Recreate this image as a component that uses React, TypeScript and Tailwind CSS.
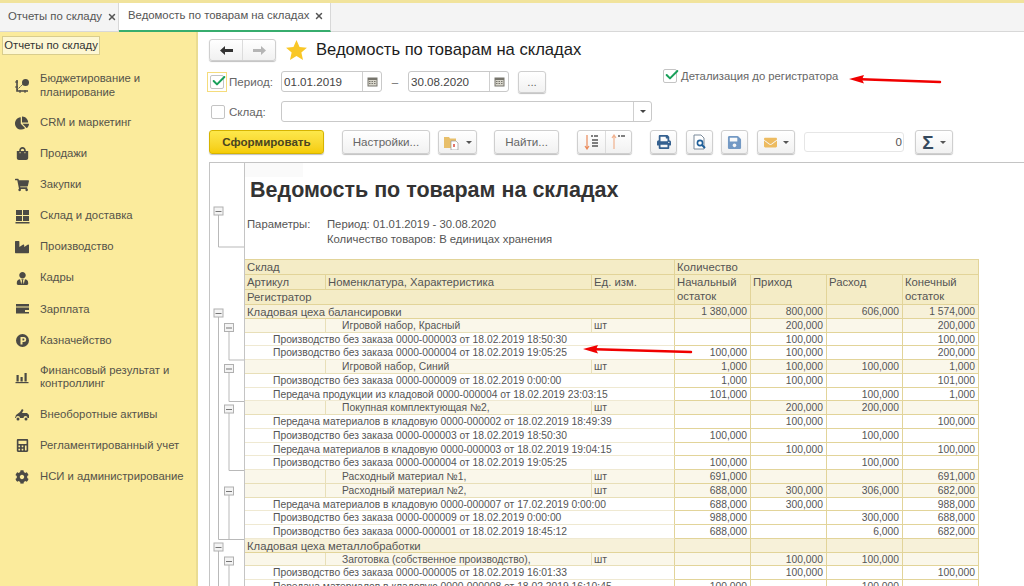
import { ReactNode } from "react";
import { FaChartPie, FaShoppingBag, FaShoppingCart, FaIndustry, FaUserTie, FaCog, FaCalculator, FaPrint, FaSave, FaEnvelope } from "react-icons/fa";
import { X, Check } from "lucide-react";

const ICON = "#4b4a45";

const BudgetIcon = () => (
  <svg width="16" height="16" viewBox="0 0 16 16" fill="none" stroke={ICON}>
    <path d="M3 2v11h11" strokeWidth="1.6" />
    <path d="M3 12l7-7" strokeWidth="1" strokeDasharray="2 1" />
    <path d="M1 4h3M1 9h3M6 15v-3M11 15v-3" strokeWidth="1" />
    <circle cx="11.5" cy="4.5" r="3.5" fill={ICON} stroke="none" />
  </svg>
);
const StockIcon = () => (
  <svg width="15" height="15" viewBox="0 0 15 15" fill={ICON}>
    <rect x="1" y="1" width="6" height="5" />
    <rect x="8" y="1" width="6" height="5" />
    <rect x="1" y="7" width="6" height="5" />
    <rect x="8" y="7" width="6" height="5" />
    <rect x="0.5" y="13" width="14" height="1.5" />
  </svg>
);
const WalletIcon = () => (
  <svg width="15" height="15" viewBox="0 0 15 15" fill={ICON}>
    <rect x="1" y="2" width="13" height="2.5" />
    <path d="M1 5.5h13v2.5h-4v2h4v1.5H1z" />
  </svg>
);
const CoinIcon = () => (
  <svg width="15" height="15" viewBox="0 0 15 15" fill={ICON}>
    <path fillRule="evenodd" d="M7.5 1a6.5 6.5 0 1 1 0 13a6.5 6.5 0 0 1 0-13zM5.5 4v7.5h2V9h1.2a2.5 2.5 0 0 0 0-5zM7.5 5.6h1a.9.9 0 0 1 0 1.8h-1z" />
  </svg>
);
const BarsIcon = () => (
  <svg width="14" height="14" viewBox="0 0 14 14" fill={ICON}>
    <rect x="1.5" y="5" width="2.2" height="6.5" />
    <rect x="5.5" y="7" width="2.2" height="4.5" />
    <rect x="9.5" y="3" width="2.2" height="8.5" />
    <rect x="0.5" y="12" width="13" height="1.2" />
  </svg>
);
const AssetsIcon = () => (
  <svg width="16" height="15" viewBox="0 0 16 15" fill={ICON}>
    <path d="M1 11l1-3 4-3 2-3 1.500 1-1.500 3h5l2 2v3h-1.500a2 2 0 0 0-4 0H6a2 2 0 0 0-4 0z" />
    <circle cx="4" cy="12" r="1.500" />
    <circle cx="12" cy="12" r="1.500" />
  </svg>
);

const menu: { label: ReactNode; icon: ReactNode; tall?: boolean }[] = [
  { label: <>Бюджетирование и<br />планирование</>, icon: <BudgetIcon />, tall: true },
  { label: "CRM и маркетинг", icon: <FaChartPie size={14} color={ICON} /> },
  { label: "Продажи", icon: <FaShoppingBag size={13} color={ICON} /> },
  { label: "Закупки", icon: <FaShoppingCart size={14} color={ICON} /> },
  { label: "Склад и доставка", icon: <StockIcon /> },
  { label: "Производство", icon: <FaIndustry size={14} color={ICON} /> },
  { label: "Кадры", icon: <FaUserTie size={13} color={ICON} /> },
  { label: "Зарплата", icon: <WalletIcon /> },
  { label: "Казначейство", icon: <CoinIcon /> },
  { label: <>Финансовый результат и<br />контроллинг</>, icon: <BarsIcon />, tall: true },
  { label: "Внеоборотные активы", icon: <AssetsIcon /> },
  { label: "Регламентированный учет", icon: <FaCalculator size={13} color={ICON} /> },
  { label: "НСИ и администрирование", icon: <FaCog size={14} color={ICON} /> },
];

const BTN = "flex items-center justify-center shrink-0 h-[24px] rounded-[3px] border border-[#cfcfcf] bg-linear-to-b from-white to-[#f1f1f1] shadow-[0_1px_1px_rgba(0,0,0,0.25)] text-[#666]";

const Caret = () => <span className="ml-[6px] w-0 h-0 border-x-[3px] border-x-transparent border-t-[3px] border-t-[#555]" />;

const Calendar = () => (
  <span className="flex items-center justify-center w-[19px] h-full border-l border-[#cfcfcf]">
    <svg width="11" height="11" viewBox="0 0 11 11" fill="#77756c">
      <path d="M0.500 1.500h10v9h-10z" />
      <path d="M1.500 4h8v5.500h-8z" fill="#d8d6cc" />
      <path d="M2 5h1.500v1H2zM4.500 5H6v1H4.500zM7 5h1.500v1H7zM2 7h1.500v1H2zM4.500 7H6v1H4.500zM7 7h1.500v1H7z" />
    </svg>
  </span>
);

const DateField = ({ value }: { value: string }) => (
  <div className="flex items-center justify-between shrink-0 w-[101px] h-[21px] rounded-[3px] border border-[#c9c9c9] bg-white pl-[2px] text-[11.6px] text-[#444]">
    {value}
    <Calendar />
  </div>
);

const CheckBox = ({ checked }: { checked?: boolean }) => (
  <span className="relative block shrink-0 w-[14px] h-[14px] rounded-[2px] border border-[#c4c4c4] bg-white">
    {checked && <Check size={16} strokeWidth={3} color="#18a05a" className="absolute -top-[3px] -left-[0.5px]" />}
  </span>
);

const Arrow = ({ x1, y1, x2, y2 }: { x1: number; y1: number; x2: number; y2: number }) => (
  <svg className="absolute top-0 left-0 pointer-events-none" width="1024" height="586">
    <line x1={x1 + 12} y1={y1 + 0.3} x2={x2} y2={y2} stroke="#f00000" strokeWidth="2.500" strokeLinecap="round" />
    <polygon points={`${x1},${y1} ${x1 + 15},${y1 - 4} ${x1 + 13},${y1 + 0.5} ${x1 + 15},${y1 + 4.5}`} fill="#f00000" />
  </svg>
);

const TreeNode = ({ x, y, to, end = true }: { x: number; y: number; to: number; end?: boolean }) => (
  <g>
    <path d={end ? `M${x} ${y}V${to}H35` : `M${x} ${y}V${to}`} fill="none" stroke="#b9b9b9" />
    <rect x={x - 4.5} y={y - 4} width="9" height="8" fill="#f4f4f4" stroke="#b0b0b0" />
    <path d={`M${x - 3} ${y + 0.5}h6`} stroke="#777" />
  </g>
);

// gutter coordinates: x - 209, y - 162
const tree = [
  { x: 8.5, y: 48, to: 84 },
  { x: 8.5, y: 150, to: 376.5 },
  { x: 19, y: 164.5, to: 197 },
  { x: 19, y: 205.5, to: 238.5 },
  { x: 19, y: 246, to: 307.500 },
  { x: 19, y: 328, to: 376.5 },
  { x: 8.5, y: 384, to: 424, end: false },
  { x: 19, y: 398, to: 424, end: false },
];

type Row = { kind: "group" | "item" | "doc"; text: string; nums: string[]; unit?: boolean };

const doc = (text: string, ...nums: string[]): Row => ({ kind: "doc", text, nums });
const item = (text: string, ...nums: string[]): Row => ({ kind: "item", text, nums, unit: true });

const rows: Row[] = [
  { kind: "group", text: "Кладовая цеха балансировки", nums: ["1 380,000", "800,000", "606,000", "1 574,000"] },
  item("Игровой набор, Красный", "", "200,000", "", "200,000"),
  doc("Производство без заказа 0000-000003 от 18.02.2019 18:50:30", "", "100,000", "", "100,000"),
  doc("Производство без заказа 0000-000004 от 18.02.2019 19:05:25", "100,000", "100,000", "", "200,000"),
  item("Игровой набор, Синий", "1,000", "100,000", "100,000", "1,000"),
  doc("Производство без заказа 0000-000009 от 18.02.2019 0:00:00", "1,000", "100,000", "", "101,000"),
  doc("Передача продукции из кладовой 0000-000004 от 18.02.2019 23:03:15", "101,000", "", "100,000", "1,000"),
  item("Покупная комплектующая №2,", "", "200,000", "200,000", ""),
  doc("Передача материалов в кладовую 0000-000002 от 18.02.2019 18:49:39", "", "100,000", "", "100,000"),
  doc("Производство без заказа 0000-000003 от 18.02.2019 18:50:30", "100,000", "", "100,000", ""),
  doc("Передача материалов в кладовую 0000-000003 от 18.02.2019 19:04:15", "", "100,000", "", "100,000"),
  doc("Производство без заказа 0000-000004 от 18.02.2019 19:05:25", "100,000", "", "100,000", ""),
  item("Расходный материал №1,", "691,000", "", "", "691,000"),
  item("Расходный материал №2,", "688,000", "300,000", "306,000", "682,000"),
  doc("Передача материалов в кладовую 0000-000007 от 17.02.2019 0:00:00", "688,000", "300,000", "", "988,000"),
  doc("Производство без заказа 0000-000009 от 18.02.2019 0:00:00", "988,000", "", "300,000", "688,000"),
  doc("Производство без заказа 0000-000001 от 18.02.2019 18:45:12", "688,000", "", "6,000", "682,000"),
  { kind: "group", text: "Кладовая цеха металлобработки", nums: ["", "", "", ""] },
  item("Заготовка (собственное производство),", "", "100,000", "100,000", ""),
  doc("Производство без заказа 0000-000005 от 18.02.2019 16:01:33", "", "100,000", "", "100,000"),
  doc("Передача материалов в кладовую 0000-000008 от 18.02.2019 16:10:45", "100,000", "", "100,000", ""),
];

const HEAD = "bg-[#f4ecc6] border-r border-b border-[#e2d499] px-[2px] leading-[14px] overflow-hidden whitespace-nowrap text-[11.3px]";
const BG = { group: "bg-[#f7f1d9]", item: "bg-[#faf7ea]", doc: "bg-white" };

const TableRow = ({ row }: { row: Row }) => {
  const bg = BG[row.kind];
  const cell = `${bg} leading-[14px] whitespace-nowrap`;
  return (
    <>
      {row.kind === "group" && <div className={`${cell} col-span-3 border-r border-b border-[#e2d499] pl-[2px] text-[11.3px]`}>{row.text}</div>}
      {row.kind === "doc" && <div className={`${cell} col-span-3 border-r border-b border-r-[#e2d499] border-b-[#efe9d2] pl-[28px]`}>{row.text}</div>}
      {row.kind === "item" && (
        <>
          <div className={`${cell} border-r border-b border-[#e8dfb8]`} />
          <div className={`${cell} border-r border-b border-[#e8dfb8] pl-[16px]`}>{row.text}</div>
          <div className={`${cell} border-r border-b border-r-[#e2d499] border-b-[#e8dfb8] pl-[2px]`}>шт</div>
        </>
      )}
      {row.nums.map((n, i) => (
        <div key={i} className={`${cell} border-r border-b border-[#e2d499] text-right pr-[3px]`}>{n}</div>
      ))}
    </>
  );
};

export default function App() {
  return (
    <div className="relative w-[1024px] h-[586px] overflow-hidden flex flex-col bg-white font-['Liberation_Sans',Arial,sans-serif]">
      {/* tabs */}
      <div className="flex h-[32px] shrink-0 border-t-[3px] border-t-[#f1e39c] border-b border-b-[#d8d8d8] bg-[#f4f4f4] text-[11.35px] text-[#555] whitespace-nowrap">
        <div className="flex items-center w-[119px] pl-[8px] border-r border-[#d8d8d8]">
          Отчеты по складу
          <X size={10} strokeWidth={3.5} color="#555" className="ml-[5px]" />
        </div>
        <div className="flex items-center w-[212px] pl-[9px] bg-white border-r border-[#d8d8d8] border-b-2 border-b-[#37ad6e] mb-[-1px] pb-[1px]">
          Ведомость по товарам на складах
          <X size={10} strokeWidth={3.5} color="#555" className="ml-[5px]" />
        </div>
      </div>

      <div className="flex flex-1 min-h-0">
        {/* sidebar */}
        <aside className="w-[198px] shrink-0 bg-[#fbeb9c] border-r-2 border-[#eadc92] text-[11.3px] text-[#55534a]">
          <div className="mt-[4px] ml-[2px] w-[98px] h-[19px] flex items-center justify-center whitespace-nowrap bg-[#fdf7d3] border border-[#d9cd8d] text-[#333]">Отчеты по складу</div>
          <div className="mt-[9.200px]">
            {menu.map((m, i) => (
              <div key={i} className={`flex items-center ${m.tall ? "h-[43px]" : "h-[31.1px]"}`}>
                <span className="w-[40px] pl-[4px] shrink-0 flex items-center justify-center">{m.icon}</span>
                <span className="leading-[13.500px]">{m.label}</span>
              </div>
            ))}
          </div>
        </aside>

        {/* main */}
        <main className="flex-1 min-w-0 pl-[11px] pt-[7px] text-[11.6px] text-[#666]">
          <div className="flex items-center h-[22px]">
            <div className={`${BTN} !h-[22px] w-[67px]`}>
              <span className="flex items-center justify-center w-[33px] h-full border-r border-[#dcdcdc]">
                <svg width="13" height="9" viewBox="0 0 13 9" fill="#333"><path d="M0 4.500L5 0v3h8v3H5v3z" /></svg>
              </span>
              <span className="flex items-center justify-center flex-1">
                <svg width="13" height="9" viewBox="0 0 13 9" fill="#b5b5b5"><path d="M13 4.500L8 0v3H0v3h8v3z" /></svg>
              </span>
            </div>
            <svg className="ml-[10px]" width="21" height="20" viewBox="0 0 24 23" fill="#f9c726"><path d="M12 0l3.500 8 8.500.8-6.400 5.700 1.900 8.500L12 18.500 4.500 23l1.900-8.500L0 8.800 8.500 8z" /></svg>
            <h1 className="ml-[9px] text-[16.6px] text-[#1c1c1c] whitespace-nowrap">Ведомость по товарам на складах</h1>
          </div>

          <div className="flex items-center h-[21px] mt-[10px]">
            <span className="-ml-[2px] flex items-center justify-center shrink-0 w-[20px] h-[20px] border border-[#f5dc7c]"><CheckBox checked /></span>
            <span className="ml-[2px] w-[52px] shrink-0">Период:</span>
            <DateField value="01.01.2019" />
            <span className="w-[26px] shrink-0 text-center">–</span>
            <DateField value="30.08.2020" />
            <button className={`${BTN} !h-[22px] ml-[9px] w-[28px]`}>...</button>
            <span className="ml-[117px] -mt-[11px]"><CheckBox checked /></span>
            <span className="ml-[4px] -mt-[11px] whitespace-nowrap text-[11.3px]">Детализация до регистратора</span>
          </div>

          <div className="flex items-center h-[21px] mt-[9px]">
            <span className="ml-[2px]"><CheckBox /></span>
            <span className="ml-[4px] w-[52px] shrink-0">Склад:</span>
            <div className="flex justify-end w-[371px] h-full rounded-[3px] border border-[#c9c9c9] bg-white">
              <span className="flex items-center justify-center w-[18px] h-full border-l border-[#cfcfcf]">
                <span className="w-0 h-0 border-x-[3px] border-x-transparent border-t-[3px] border-t-[#444]" />
              </span>
            </div>
          </div>

          <div className="flex items-center h-[24px] mt-[8px]">
            <button className="flex items-center justify-center w-[115px] h-full rounded-[3px] border border-[#d6b400] bg-linear-to-b from-[#fde84a] to-[#f5cc00] shadow-[0_1px_1px_rgba(0,0,0,0.25)] font-bold text-[11.6px] text-[#4a4420]">Сформировать</button>
            <button className={`${BTN} ml-[18px] w-[88px]`}>Настройки...</button>
            <button className={`${BTN} ml-[8px] w-[39px]`}>
              <svg width="16" height="15" viewBox="0 0 16 15">
                <path d="M0 2h5l1 1.500h6V13H0z" fill="#e8bf6a" />
                <path d="M7 6h5l2 2v7H7z" fill="#fff" stroke="#999" strokeWidth="0.700" />
                <path d="M10 9v3" stroke="#d9483b" strokeWidth="1.500" />
              </svg>
              <Caret />
            </button>
            <button className={`${BTN} ml-[17px] w-[65px]`}>Найти...</button>
            <div className={`${BTN} ml-[18px] w-[55px]`}>
              <span className="flex items-center justify-center w-[28px] h-full border-r border-[#dcdcdc]">
                <svg width="15" height="16" viewBox="0 0 15 16" fill="none">
                  <path d="M3 1v13M1 12l2 3 2-3" stroke="#ea8a5a" strokeWidth="1.200" />
                  <path d="M7 2h2M10 2h4M8 6h6M8 9h6M8 12h6" stroke="#555" strokeWidth="1.400" />
                </svg>
              </span>
              <span className="flex items-center justify-center flex-1">
                <svg width="15" height="16" viewBox="0 0 15 16" fill="none">
                  <path d="M3 15V2M1 4l2-3 2 3" stroke="#f1b18e" strokeWidth="1.200" />
                  <path d="M7 2h2M10 2h4" stroke="#555" strokeWidth="1.400" />
                </svg>
              </span>
            </div>
            <button className={`${BTN} ml-[18px] w-[27px]`}><FaPrint size={14} color="#34608f" /></button>
            <button className={`${BTN} ml-[9px] w-[27px]`}>
              <svg width="15" height="16" viewBox="0 0 15 16" fill="none">
                <path d="M2 1h7l3 3v11H2z" fill="#fff" stroke="#7a8a9a" />
                <circle cx="8" cy="9" r="2.600" stroke="#1f5f99" strokeWidth="1.600" />
                <path d="M10 11l3 3" stroke="#1f5f99" strokeWidth="2" />
              </svg>
            </button>
            <button className={`${BTN} ml-[8px] w-[27px]`}><FaSave size={15} color="#7399c4" /></button>
            <button className={`${BTN} ml-[9px] w-[38px]`}><FaEnvelope size={13} color="#edbb60" /><Caret /></button>
            <div className="ml-[9px] flex items-center justify-end w-[100px] h-[20px] rounded-[3px] border border-[#e6e6e6] bg-white pr-[1px] text-[#555]">0</div>
            <button className={`${BTN} ml-[11px] w-[38px]`}>
              <span className="text-[19px] leading-none font-bold text-[#34495e]">Σ</span><Caret />
            </button>
          </div>

          {/* report */}
          <div className="flex h-[424px] mt-[8px] -mr-px border-t border-l border-[#c4c4c4] text-[10.3px] text-[#555]">
            <svg className="shrink-0" width="35" height="424">
              {tree.map((t, i) => <TreeNode key={i} {...t} />)}
              <path d="M34.500 0V424" stroke="#c4c4c4" />
            </svg>
            <div className="flex-1 min-w-0">
              <div className="w-[58px] h-[14px] bg-[#fafafa]" />
              <h2 className="mt-[1px] pl-[5px] text-[21.5px] leading-[25px] font-bold text-[#333] whitespace-nowrap">Ведомость по товарам на складах</h2>
              <div className="flex mt-[14px] pl-[2px] text-[11.3px] leading-[15px] text-[#555]">
                <span className="w-[80px]">Параметры:</span>
                <div>
                  <div>Период: 01.01.2019 - 30.08.2020</div>
                  <div>Количество товаров: В единицах хранения</div>
                </div>
              </div>
              <div className="mt-[12px] w-[734px] grid grid-cols-[81px_266px_83px_76px_76px_76px_76px] grid-rows-[15px_15px_15px] auto-rows-[13.750px] border-t border-[#e2d499]">
                <div className={`${HEAD} col-span-3`}>Склад</div>
                <div className={`${HEAD} col-span-4`}>Количество</div>
                <div className={HEAD}>Артикул</div>
                <div className={HEAD}>Номенклатура, Характеристика</div>
                <div className={HEAD}>Ед. изм.</div>
                <div className={`${HEAD} row-span-2`}>Начальный<br />остаток</div>
                <div className={`${HEAD} row-span-2`}>Приход</div>
                <div className={`${HEAD} row-span-2`}>Расход</div>
                <div className={`${HEAD} row-span-2`}>Конечный<br />остаток</div>
                <div className={`${HEAD} col-span-3`}>Регистратор</div>
                {rows.map((r, i) => <TableRow key={i} row={r} />)}
              </div>
            </div>
          </div>
        </main>
      </div>

      <Arrow x1={849} y1={79} x2={940} y2={82} />
      <Arrow x1={583} y1={349} x2={691} y2={352} />
    </div>
  );
}
